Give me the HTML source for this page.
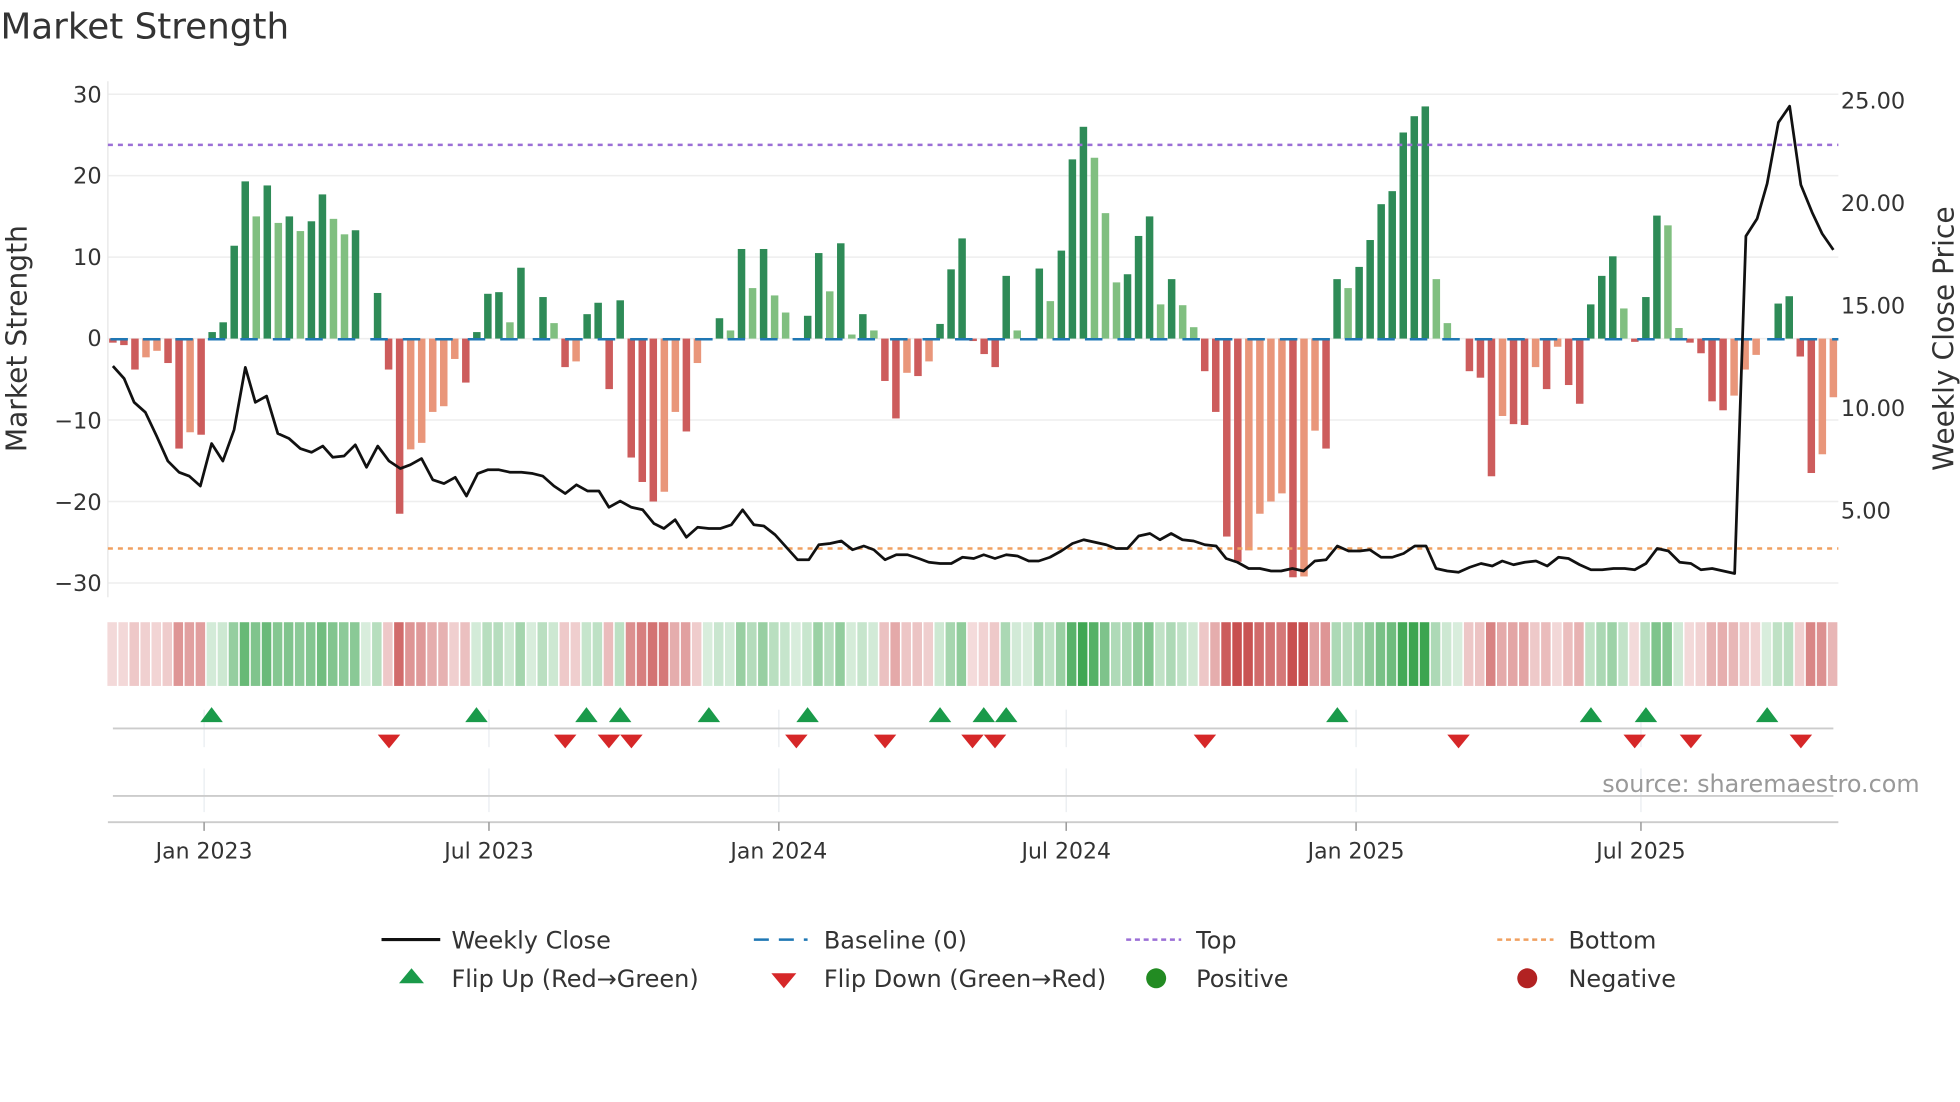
<!DOCTYPE html>
<html><head><meta charset="utf-8"><style>
html,body{margin:0;padding:0;background:#fff;}
svg{display:block;font-family:"DejaVu Sans","Liberation Sans",sans-serif;}
</style></head><body>
<svg id="s" width="1960" height="1102" viewBox="0 0 1568 882" xmlns="http://www.w3.org/2000/svg">
<text x="0" y="31" font-size="28.6" fill="#333">Market Strength</text>
<g id="grid" stroke="#eeeeee" stroke-width="1.2"></g>
<line x1="86" y1="65" x2="86" y2="478" stroke="#e6e6e6"/>
<g id="bars"></g>
<line x1="86" y1="271.5" x2="1471" y2="271.5" stroke="#1f77b4" stroke-width="2" stroke-dasharray="14 12" stroke-dashoffset="-2"/>
<line x1="86" y1="116" x2="1471" y2="116" stroke="#9b6fd6" stroke-width="2" stroke-dasharray="4 4"/>
<line x1="86" y1="439" x2="1471" y2="439" stroke="#f0a060" stroke-width="2" stroke-dasharray="4 4"/>
<polyline id="price" fill="none" stroke="#111" stroke-width="2.2" stroke-linejoin="round"/>
<g font-size="18" fill="#333" text-anchor="end">
<text x="81" y="82">30</text><text x="81" y="147">20</text><text x="81" y="212">10</text><text x="81" y="277">0</text><text x="81" y="343">−10</text><text x="81" y="408">−20</text><text x="81" y="473">−30</text>
</g>
<g font-size="18" fill="#333">
<text x="1473" y="87">25.00</text><text x="1473" y="169">20.00</text><text x="1473" y="251">15.00</text><text x="1473" y="333">10.00</text><text x="1473" y="415">5.00</text>
</g>
<text transform="translate(21,271) rotate(-90)" font-size="22.5" fill="#333" text-anchor="middle">Market Strength</text>
<text transform="translate(1563,271) rotate(-90)" font-size="22.5" fill="#333" text-anchor="middle">Weekly Close Price</text>
<g id="heat"></g>
<g stroke="#e8ecf0" stroke-width="1">
<line x1="163" y1="568" x2="163" y2="598"/><line x1="391" y1="568" x2="391" y2="598"/><line x1="623" y1="568" x2="623" y2="598"/><line x1="853" y1="568" x2="853" y2="598"/><line x1="1085" y1="568" x2="1085" y2="598"/><line x1="1313" y1="568" x2="1313" y2="598"/>
<line x1="163" y1="615" x2="163" y2="650"/><line x1="391" y1="615" x2="391" y2="650"/><line x1="623" y1="615" x2="623" y2="650"/><line x1="853" y1="615" x2="853" y2="650"/><line x1="1085" y1="615" x2="1085" y2="650"/><line x1="1313" y1="615" x2="1313" y2="650"/>
</g>
<line x1="90" y1="583" x2="1467" y2="583" stroke="#ccc" stroke-width="1.5"/>
<line x1="90" y1="637" x2="1467" y2="637" stroke="#ccc" stroke-width="1.5"/>
<line x1="86" y1="658" x2="1471" y2="658" stroke="#ccc" stroke-width="1.5"/>
<g id="tri"></g>
<g stroke="#999" stroke-width="1.2">
<line x1="163" y1="658" x2="163" y2="665"/><line x1="391" y1="658" x2="391" y2="665"/><line x1="623" y1="658" x2="623" y2="665"/><line x1="853" y1="658" x2="853" y2="665"/><line x1="1085" y1="658" x2="1085" y2="665"/><line x1="1313" y1="658" x2="1313" y2="665"/>
</g>
<g font-size="17.6" fill="#333" text-anchor="middle">
<text x="163" y="687">Jan 2023</text><text x="391" y="687">Jul 2023</text><text x="623" y="687">Jan 2024</text><text x="853" y="687">Jul 2024</text><text x="1085" y="687">Jan 2025</text><text x="1313" y="687">Jul 2025</text>
</g>
<text x="1536" y="634" font-size="19.1" fill="#999" text-anchor="end">source: sharemaestro.com</text>
<g font-size="19.2" fill="#333">
<line x1="305" y1="752" x2="352" y2="752" stroke="#111" stroke-width="2.5"/><text x="361" y="759">Weekly Close</text>
<line x1="603" y1="752" x2="646" y2="752" stroke="#1f77b4" stroke-width="2" stroke-dasharray="12 8"/><text x="659" y="759">Baseline (0)</text>
<line x1="901" y1="752" x2="945" y2="752" stroke="#9b6fd6" stroke-width="2" stroke-dasharray="4 3"/><text x="957" y="759">Top</text>
<line x1="1198" y1="752" x2="1243" y2="752" stroke="#f0a060" stroke-width="2" stroke-dasharray="4 3"/><text x="1255" y="759">Bottom</text>
<path d="M319 787 L329 775 L339 787 Z" fill="#1a9a4a"/><text x="361" y="790">Flip Up (Red→Green)</text>
<path d="M617 779 L627 791 L637 779 Z" fill="#d62728"/><text x="659" y="790">Flip Down (Green→Red)</text>
<circle cx="925" cy="783" r="8" fill="#228b22"/><text x="957" y="790">Positive</text>
<circle cx="1222" cy="783" r="8" fill="#b22222"/><text x="1255" y="790">Negative</text>
</g>
</svg>
<script>
var NS="http://www.w3.org/2000/svg";
function el(p,t,a){var e=document.createElementNS(NS,t);for(var k in a)e.setAttribute(k,a[k]);p.appendChild(e);return e;}
var g=document.getElementById("grid");
[30,20,10,0,-10,-20,-30].forEach(function(v){var y=271-v*6.52;el(g,"line",{x1:86,x2:1471,y1:y,y2:y});});
var raw="-0.5 -0.8 -3.8 -2.3L -1.5L -3 -13.5 -11.5L -11.8 0.8 2 11.4 19.3 15L 18.8 14.2L 15 13.2L 14.4 17.7 14.7L 12.8L 13.3 0 5.6 -3.8 -21.5 -13.6L -12.8L -9L -8.3L -2.5L -5.4 0.8 5.5 5.7 2L 8.7 0 5.1 1.9L -3.5 -2.8L 3 4.4 -6.2 4.7 -14.6 -17.6 -20 -18.8L -9L -11.4 -3L 0 2.5 1L 11 6.2L 11 5.3L 3.2L 0 2.8 10.5 5.8L 11.7 0.5L 3 1L -5.2 -9.8 -4.2L -4.6 -2.8L 1.8 8.5 12.3 -0.3 -1.9 -3.5 7.7 1L 0 8.6 4.6L 10.8 22 26 22.2L 15.4L 6.9L 7.9 12.6 15 4.2L 7.3 4.1L 1.4L -4 -9 -24.3 -27.4 -26L -21.5L -20L -19L -29.3 -29.2L -11.3L -13.5 7.3 6.2L 8.8 12.1 16.5 18.1 25.3 27.3 28.5 7.3L 1.9L 0 -4 -4.8 -16.9 -9.5L -10.5 -10.6 -3.5L -6.2 -1L -5.7 -8 4.2 7.7 10.1 3.7L -0.4 5.1 15.1 13.9L 1.3L -0.5 -1.8 -7.7 -8.8 -7L -3.8L -2L 0 4.3 5.2 -2.2 -16.5 -14.2L -7.2L".split(" ");
var b=document.getElementById("bars"),h=document.getElementById("heat");
var step=(1467-90)/(raw.length-1);
raw.forEach(function(s,i){
 var L=s.indexOf("L")>=0,v=parseFloat(s),x=90+i*step;
 var c=v>=0?(L?"#80bf80":"#2e8b57"):(L?"#e9967a":"#cd5c5c");
 if(v!==0){var y1=271,y2=271-v*6.52;el(b,"rect",{x:x-3,y:Math.min(y1,y2),width:6,height:Math.abs(y2-y1),fill:c});}
 var a=Math.min(1,0.2+Math.abs(v)/30*0.9);
 var hc=v>=0?"rgba(60,165,80,"+a+")":"rgba(200,80,80,"+a+")";
 el(h,"rect",{x:x-4.4,y:498,width:7.6,height:51,fill:hc});
});
var pts="90,293 99,303 107,322 116,330 125,349 134,369 143,378 151,381 160,389 169,355 178,369 187,344 196,294 204,322 213,317 222,347 231,351 240,359 249,362 258,357 266,366 275,365 284,356 293,374 302,357 311,369 320,375 328,372 337,367 346,384 355,387 364,382 373,397 382,379 390,376 399,376 408,378 417,378 426,379 434,381 443,389 452,395 461,388 470,393 479,393 487,406 496,401 505,406 514,408 523,419 531,423 540,416 549,430 558,422 567,423 576,423 585,420 594,408 603,420 611,421 620,428 629,438 638,448 647,448 655,436 664,435 673,433 682,440 691,437 699,440 708,448 717,444 726,444 735,447 743,450 752,451 761,451 770,446 779,447 787,444 796,447 805,444 814,445 823,449 831,449 840,446 849,441 858,435 867,432 876,434 885,436 893,439 902,439 911,429 920,427 928,432 937,427 946,432 955,433 964,436 973,437 981,447 990,450 999,455 1008,455 1017,457 1025,457 1034,455 1043,457 1052,449 1061,448 1070,437 1079,441 1088,441 1096,440 1105,446 1114,446 1123,443 1132,437 1141,437 1149,455 1158,457 1167,458 1176,454 1185,451 1194,453 1202,449 1211,452 1220,450 1229,449 1238,453 1247,446 1255,447 1264,452 1273,456 1282,456 1291,455 1300,455 1308,456 1317,451 1326,439 1335,441 1344,450 1353,451 1361,456 1370,455 1379,457 1388,459 1397,189 1406,175 1414,147 1423,98 1432,85 1441,148 1450,170 1458,187 1467,200";
document.getElementById("price").setAttribute("points",pts);
var t=document.getElementById("tri");
[169,381,469,496,567,646,752,787,805,1070,1273,1317,1414].forEach(function(x){el(t,"path",{d:"M"+(x-9)+" 578 L"+x+" 566 L"+(x+9)+" 578 Z",fill:"#1a9a4a"});});
[311,452,487,505,637,708,778,796,964,1167,1308,1353,1441].forEach(function(x){el(t,"path",{d:"M"+(x-9)+" 588 L"+x+" 599 L"+(x+9)+" 588 Z",fill:"#d62728"});});
</script>
</body></html>
